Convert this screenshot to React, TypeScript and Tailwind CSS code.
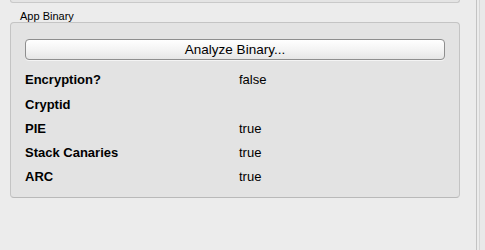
import React from "react";

const ROWS = [
  { label: "Encryption?", value: "false" },
  { label: "Cryptid", value: "" },
  { label: "PIE", value: "true" },
  { label: "Stack Canaries", value: "true" },
  { label: "ARC", value: "true" },
];

const App: React.FC = () => {
  return (
    <div
      className="w-[485px] h-[250px] bg-[#ececec] flex overflow-hidden text-black"
      style={{ fontFamily: '"Liberation Sans", Arial, sans-serif' }}
    >
      <div className="w-[476px] flex flex-col pl-[10px] pr-[16px]">
        {/* tail of the previous group box */}
        <div className="h-[3px] border-x border-b border-[#c9c9c9] rounded-b-[4px] bg-[#e4e4e4]" />

        <div className="pl-[10px] pt-[7px] text-[11px] leading-[12px] h-[19px]">
          App Binary
        </div>

        <div className="h-[176px] border border-[#c4c4c4] border-b-[#b9b9b9] rounded-[4px] bg-[#e3e3e3] px-[14px] pt-[14px]">
          <button className="w-full h-[21px] rounded-[4px] border border-[#8e8e8e] bg-gradient-to-b from-[#ffffff] via-[#f4f4f4] to-[#e6e6e6] text-[13.5px] leading-[19px] text-center shadow-[0_1px_0_rgba(255,255,255,0.6)]">
            Analyze Binary...
          </button>

          <div className="mt-[7px] flex flex-col">
            {ROWS.map((row) => (
              <div key={row.label} className="h-[24.25px] flex items-center text-[13px]">
                <span className="w-[214px] font-bold">{row.label}</span>
                <span>{row.value}</span>
              </div>
            ))}
          </div>
        </div>
      </div>

      {/* right edge divider */}
      <div className="w-px bg-[#c3c3c3]" />
      <div className="w-[2px] bg-[#ececec]" />
      <div className="w-px bg-[#d6d6d6]" />
      <div className="flex-1 bg-[#e9e9e9]" />
    </div>
  );
};

export default App;
